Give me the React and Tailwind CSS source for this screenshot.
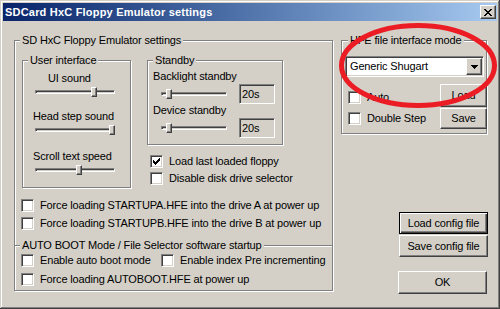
const sunken =
  "border border-t-[#808080] border-l-[#808080] border-b-white border-r-white shadow-[inset_1px_1px_0_#404040,inset_-1px_-1px_0_#d4d0c8]";
const raised =
  "border border-t-white border-l-white border-b-[#404040] border-r-[#404040] shadow-[inset_-1px_-1px_0_#808080] bg-[#d4d0c8]";
const etched = "border border-[#808080] shadow-[inset_1px_1px_0_#fff,1px_1px_0_#fff]";

function Group({ label, className = "", labelClass = "left-[5px]", children }) {
  return (
    <div className={`relative ${etched} ${className}`}>
      <span
        className={`absolute -top-[7px] ${labelClass} whitespace-nowrap bg-[#d4d0c8] px-[2px] leading-[13px]`}
      >
        {label}
      </span>
      {children}
    </div>
  );
}

function CheckRow({ label, checked, className = "" }) {
  return (
    <div className={`flex items-center ${className}`}>
      <span className={`flex h-[13px] w-[13px] shrink-0 items-center justify-center bg-white ${sunken}`}>
        {checked && (
          <svg width="7" height="7" viewBox="0 0 7 7" shapeRendering="crispEdges">
            <path
              d="M6 0h1v1H6zM5 1h2v1H5zM0 2h1v1H0zM4 2h3v1H4zM0 3h2v1H0zM3 3h3v1H3zM0 4h5v1H0zM1 5h3v1H1zM2 6h1v1H2z"
              fill="#000"
            />
          </svg>
        )}
      </span>
      <span className="ml-[6px] whitespace-nowrap leading-[13px]">{label}</span>
    </div>
  );
}

function Slider({ className = "", thumb }) {
  return (
    <div className={`relative h-[10px] ${className}`}>
      <div className={`mt-[3px] h-[4px] w-full ${sunken}`} />
      <div className={`absolute top-0 h-[10px] w-[6px] ${raised} ${thumb}`} />
    </div>
  );
}

function Field({ children }) {
  return (
    <div className={`ml-[12px] flex h-[20px] w-[36px] items-center bg-[#d4d0c8] pl-[2px] leading-[13px] ${sunken}`}>
      {children}
    </div>
  );
}

function Button({ children, className = "", isDefault }) {
  const look = isDefault
    ? "border border-black bg-[#d4d0c8] shadow-[inset_1px_1px_0_#fff,inset_-1px_-1px_0_#404040,inset_-2px_-2px_0_#808080]"
    : raised;
  return (
    <div className={`flex items-center justify-center leading-[13px] ${look} ${className}`}>{children}</div>
  );
}

export default function App() {
  return (
    <div className="relative flex h-[309px] w-[500px] flex-col overflow-hidden bg-[#d4d0c8] p-[3px] font-['Liberation_Sans',Arial,sans-serif] text-[11px] tracking-[-0.15px] text-black shadow-[inset_-1px_-1px_0_#404040,inset_1px_1px_0_#d4d0c8,inset_-2px_-2px_0_#808080,inset_2px_2px_0_#fff]">
      {/* title bar */}
      <div className="flex h-[18px] items-center justify-between bg-linear-to-r from-[#0a246a] to-[#a6caf0] pl-[2px]">
        <span className="text-[11px] font-bold tracking-[0.2px] text-white">SDCard HxC Floppy Emulator settings</span>
        <div className={`mr-[1px] flex h-[14px] w-[16px] items-center justify-center ${raised}`}>
          <svg width="8" height="7" viewBox="0 0 8 7" shapeRendering="crispEdges">
            <path
              d="M0 0h2v1H0zM6 0h2v1H6zM1 1h2v1H1zM5 1h2v1H5zM2 2h4v1H2zM3 3h2v1H3zM2 4h4v1H2zM1 5h2v1H1zM5 5h2v1H5zM0 6h2v1H0zM6 6h2v1H6z"
              fill="#000"
            />
          </svg>
        </div>
      </div>

      <div className="flex pl-[11px] pt-[19px]">
        {/* left: main settings */}
        <Group label="SD HxC Floppy Emulator settings" className="flex h-[251px] w-[319px] flex-col">
          <div className="mt-[19px] flex pl-[7px]">
            <Group label="User interface" className="flex h-[128px] w-[109px] flex-col">
              <span className="mt-[11px] pl-[25px] leading-[13px]">UI sound</span>
              <Slider className="ml-[12px] mt-[2px] w-[80px]" thumb="left-[56px]" />
              <span className="mt-[13px] pl-[10px] leading-[13px]">Head step sound</span>
              <Slider className="ml-[12px] mt-[2px] w-[80px]" thumb="left-[74px]" />
              <span className="mt-[15px] pl-[10px] leading-[13px]">Scroll text speed</span>
              <Slider className="ml-[12px] mt-[2px] w-[80px]" thumb="left-[41px]" />
            </Group>

            <div className="ml-[16px] flex flex-col">
              <Group label="Standby" className="flex h-[85px] w-[136px] flex-col">
                <span className="mt-[9px] pl-[5px] leading-[13px]">Backlight standby</span>
                <div className="mt-[1px] flex items-start">
                  <Slider className="ml-[13px] mt-[5px] w-[66px]" thumb="left-[5px]" />
                  <Field>20s</Field>
                </div>
                <span className="pl-[5px] leading-[13px]">Device standby</span>
                <div className="mt-[1px] flex items-start">
                  <Slider className="ml-[13px] mt-[5px] w-[66px]" thumb="left-[5px]" />
                  <Field>20s</Field>
                </div>
              </Group>
              <CheckRow checked className="ml-[3px] mt-[10px]" label="Load last loaded floppy" />
              <CheckRow className="ml-[3px] mt-[4px]" label="Disable disk drive selector" />
            </div>
          </div>

          <CheckRow className="ml-[6px] mt-[11px]" label="Force loading STARTUPA.HFE into the drive A at power up" />
          <CheckRow className="ml-[6px] mt-[5px]" label="Force loading STARTUPB.HFE into the drive B at power up" />

          <div className="relative mt-[15px] h-[1px] w-full bg-[#808080] shadow-[0_1px_0_#fff]">
            <span className="absolute -top-[6px] left-[5px] whitespace-nowrap bg-[#d4d0c8] px-[2px] leading-[13px]">
              AUTO BOOT Mode / File Selector software startup
            </span>
          </div>

          <div className="mt-[8px] flex pl-[6px]">
            <CheckRow className="w-[140px]" label="Enable auto boot mode" />
            <CheckRow label="Enable index Pre incrementing" />
          </div>
          <CheckRow className="ml-[6px] mt-[6px]" label="Force loading AUTOBOOT.HFE at power up" />
        </Group>

        {/* right column */}
        <div className="ml-[8px] flex flex-col">
          <Group label="HFE file interface mode" labelClass="left-[6px]" className="flex h-[94px] w-[146px] flex-col">
            <div className={`ml-[3px] mt-[15px] flex h-[21px] w-[139px] items-center bg-white ${sunken}`}>
              <span className="flex-1 pl-[4px] leading-[13px]">Generic Shugart</span>
              <span className={`mr-[1px] flex h-[17px] w-[16px] items-center justify-center ${raised}`}>
                <svg width="7" height="4" viewBox="0 0 7 4" shapeRendering="crispEdges">
                  <path d="M0 0h7v1H0zM1 1h5v1H1zM2 2h3v1H2zM3 3h1v1H3z" fill="#000" />
                </svg>
              </span>
            </div>
            <div className="mt-[7px] flex">
              <div className="flex flex-col pl-[6px]">
                <CheckRow className="mt-[7px]" label="Auto" />
                <CheckRow className="mt-[8px]" label="Double Step" />
              </div>
              <div className="-mr-[1px] ml-auto flex flex-col">
                <Button className="h-[23px] w-[47px]">Load</Button>
                <Button className="mt-[1px] h-[21px] w-[47px]">Save</Button>
              </div>
            </div>
          </Group>

          <Button isDefault className="ml-[58px] mt-[78px] h-[22px] w-[89px]">
            Load config file
          </Button>
          <Button className="ml-[58px] mt-[1px] h-[22px] w-[89px]">Save config file</Button>
          <Button className="ml-[57px] mt-[14px] h-[23px] w-[89px]">OK</Button>
        </div>
      </div>

      {/* red annotation ellipse */}
      <svg className="pointer-events-none absolute left-[339px] top-[23px]" width="160" height="86" viewBox="0 0 160 86">
        <ellipse cx="79" cy="42.5" rx="76.5" ry="40" fill="none" stroke="#ec1c24" strokeWidth="5" />
      </svg>
    </div>
  );
}
